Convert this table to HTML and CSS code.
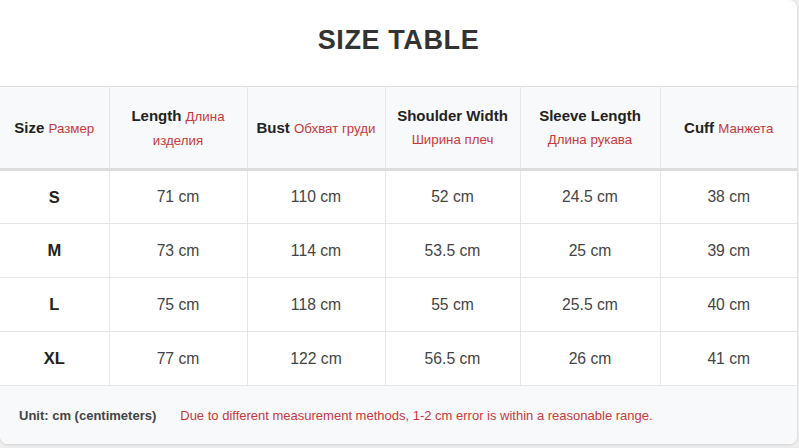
FILE: index.html
```html
<!DOCTYPE html>
<html>
<head>
<meta charset="utf-8">
<link rel="stylesheet" href="styles.css">
</head>
<body>
<div class="card">
  <h1 class="title">SIZE TABLE</h1>
  <table class="sizes">
    <colgroup>
      <col class="c1"><col class="c2"><col class="c3"><col class="c4"><col class="c5"><col class="c6">
    </colgroup>
    <thead>
      <tr>
        <th><b>Size</b> <span class="ru">Размер</span></th>
        <th><b>Length</b> <span class="ru">Длина изделия</span></th>
        <th><b>Bust</b> <span class="ru">Обхват груди</span></th>
        <th><b>Shoulder Width</b><br><span class="ru">Ширина плеч</span></th>
        <th><b>Sleeve Length</b><br><span class="ru">Длина рукава</span></th>
        <th><b>Cuff</b> <span class="ru">Манжета</span></th>
      </tr>
    </thead>
    <tbody>
      <tr><td class="sz">S</td><td>71 cm</td><td>110 cm</td><td>52 cm</td><td>24.5 cm</td><td>38 cm</td></tr>
      <tr><td class="sz">M</td><td>73 cm</td><td>114 cm</td><td>53.5 cm</td><td>25 cm</td><td>39 cm</td></tr>
      <tr><td class="sz">L</td><td>75 cm</td><td>118 cm</td><td>55 cm</td><td>25.5 cm</td><td>40 cm</td></tr>
      <tr><td class="sz">XL</td><td>77 cm</td><td>122 cm</td><td>56.5 cm</td><td>26 cm</td><td>41 cm</td></tr>
    </tbody>
  </table>
  <div class="foot">
    <span class="unit">Unit: cm (centimeters)</span>
    <span class="note">Due to different measurement methods, 1-2 cm error is within a reasonable range.</span>
  </div>
</div>
</body>
</html>
```
FILE: styles.css
```css
html, body {
  margin: 0;
  padding: 0;
  background: #eeeeee;
}
body {
  font-family: "Liberation Sans", Arial, sans-serif;
  width: 799px;
  height: 448px;
  overflow: hidden;
}
.card {
  width: 797px;
  height: 444px;
  background: #fff;
  border-radius: 0 8px 8px 8px;
  box-shadow: 0 1px 3px rgba(0,0,0,0.12);
  overflow: hidden;
}
.title {
  margin: 0;
  height: 86px;
  line-height: 80px;
  text-align: center;
  font-size: 27px;
  font-weight: bold;
  color: #333;
  letter-spacing: 0.6px;
}
.sizes {
  width: 797px;
  border-collapse: collapse;
  table-layout: fixed;
  border-top: 1px solid #dedede;
}
.c1 { width: 109px; }
.c2 { width: 138px; }
.c3 { width: 138px; }
.c4 { width: 135px; }
.c5 { width: 140px; }
.c6 { width: 137px; }
.sizes th {
  background: #f8f9fa;
  height: 83px;
  padding: 0 7px;
  font-weight: normal;
  line-height: 23px;
  border-left: 1px solid #e6e6e6;
  border-bottom: 3px solid #dddddd;
  color: #222;
  font-size: 15px;
  box-sizing: border-box;
}
.sizes th:first-child, .sizes td:first-child { border-left: none; }
.sizes th b { font-weight: bold; }
.ru {
  color: #c9383a;
  font-size: 13.3px;
}
.sizes td {
  height: 54px;
  padding: 0;
  text-align: center;
  font-size: 15.7px;
  color: #444;
  border-left: 1px solid #e6e6e6;
  border-bottom: 1px solid #e6e6e6;
  box-sizing: border-box;
}
.sizes td.sz {
  font-weight: bold;
  font-size: 16.5px;
  color: #222;
}
.foot {
  background: #f8f9fa;
  height: 59px;
  display: flex;
  align-items: center;
  padding-left: 19px;
  font-size: 13px;
}
.unit {
  font-weight: bold;
  color: #444;
  margin-right: 24px;
}
.note {
  color: #c9383a;
}
```
